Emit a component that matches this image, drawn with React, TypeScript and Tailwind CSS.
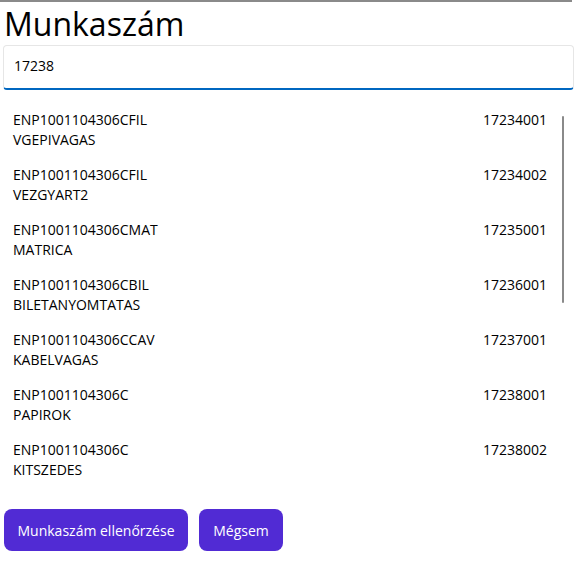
import { useState } from 'react';

const items = [
    { code: 'ENP1001104306CFIL', name: 'VGEPIVAGAS', num: '17234001' },
    { code: 'ENP1001104306CFIL', name: 'VEZGYART2', num: '17234002' },
    { code: 'ENP1001104306CMAT', name: 'MATRICA', num: '17235001' },
    { code: 'ENP1001104306CBIL', name: 'BILETANYOMTATAS', num: '17236001' },
    { code: 'ENP1001104306CCAV', name: 'KABELVAGAS', num: '17237001' },
    { code: 'ENP1001104306C', name: 'PAPIROK', num: '17238001' },
    { code: 'ENP1001104306C', name: 'KITSZEDES', num: '17238002' },
];

const App = () => {
    const [query, setQuery] = useState('17238');

    return (
        <div className="w-[580px] h-[563px] bg-white text-black overflow-hidden" style={{ fontFamily: '"Open Sans", sans-serif' }}>
            <div className="h-[2px] w-[572px] bg-[#8a8a8a]" />
            <h1 className="text-[32px] leading-[40px] pl-[4px] mt-[2px]">Munkaszám</h1>
            <div className="mx-[3px] w-[571px] h-[45px] mt-[1px] rounded-[4px] border border-[#e6e6e6] border-b-2 border-b-[#0067c0] flex items-center px-[10px] pb-[3px]">
                <input
                    value={query}
                    onChange={e => setQuery(e.target.value)}
                    className="w-full outline-none text-[14px] bg-transparent"
                    autoFocus
                />
            </div>

            <div className="relative mt-[20px] h-[400px]">
                <div className="flex flex-col">
                    {items.map((item) => (
                        <div key={item.num} className="flex justify-between h-[55px] pl-[13px] pr-[33px] text-[14px] leading-[20px]">
                            <div>
                                <div>{item.code}</div>
                                <div>{item.name}</div>
                            </div>
                            <div>{item.num}</div>
                        </div>
                    ))}
                </div>
                <div className="absolute left-[562px] top-[6px] w-[2px] h-[187px] bg-[#8a8a8a] rounded-full" />
            </div>

            <div className="flex gap-[11px] pl-[4px] -mt-[1px]">
                <button className="h-[42px] w-[184px] rounded-[8px] bg-[#512bd4] text-white text-[14px]">Munkaszám ellenőrzése</button>
                <button className="h-[42px] w-[84px] rounded-[8px] bg-[#512bd4] text-white text-[14px]">Mégsem</button>
            </div>
        </div>
    );
};

export default App;
